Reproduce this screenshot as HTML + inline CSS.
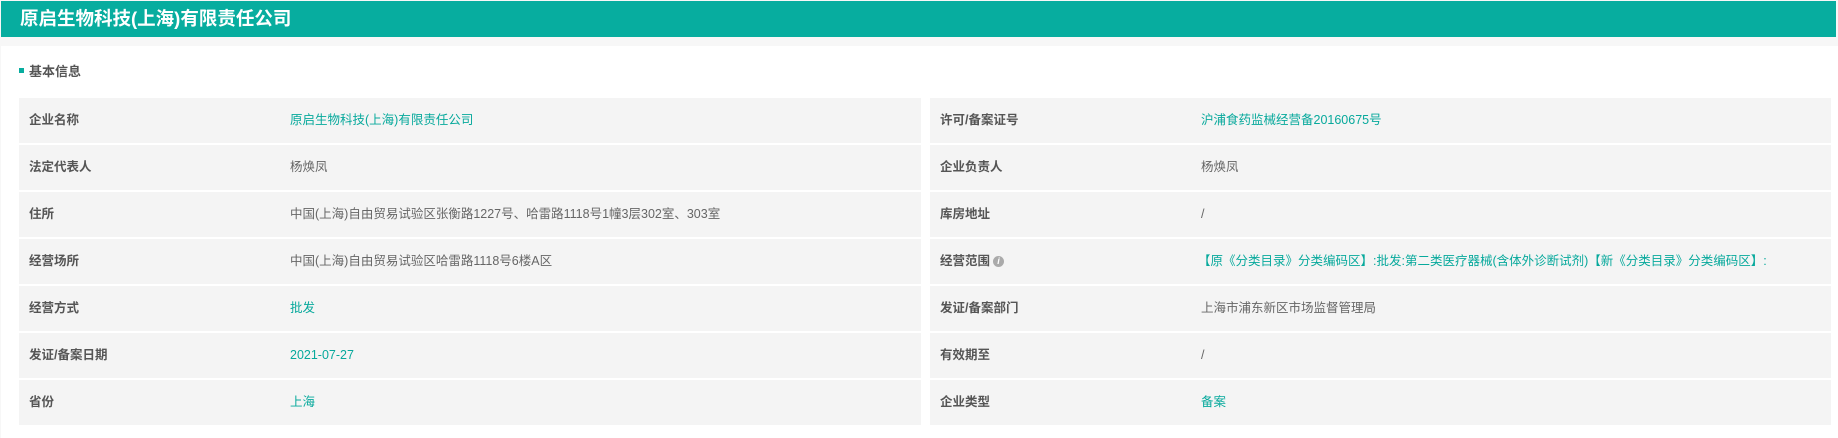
<!DOCTYPE html>
<html><head><meta charset="utf-8"><style>
*{margin:0;padding:0;box-sizing:border-box}
body{width:1838px;height:438px;background:#f7f7f7;font-family:"Liberation Sans","Noto Sans CJK SC",sans-serif;overflow:hidden;position:relative}
.hd{position:absolute;left:1px;top:1px;width:1835px;height:36px;background:#07ad9f;color:#fff;font-size:18.5px;font-weight:bold;line-height:36px;padding-left:19px}
.panel{position:absolute;left:1px;top:46px;width:1837px;height:392px;background:#fff}
.sec{position:absolute;left:19px;top:63px;font-size:13px;font-weight:bold;color:#555;line-height:18px}
.sec i{display:inline-block;width:5px;height:5px;background:#07ad9f;margin-right:5px;vertical-align:middle;position:relative;top:-2px}
.tbl{position:absolute;top:98px}
.row{height:45px;margin-bottom:2px;background:#f4f4f4;position:relative;font-size:12.5px;line-height:45px}
.l{position:absolute;left:10px;font-weight:bold;color:#555}
.v{position:absolute;color:#666}
.t{color:#07a99c}
.info{display:inline-block;width:11px;height:11px;border-radius:50%;background:#aaa;color:#fff;font-size:9px;line-height:11px;text-align:center;vertical-align:middle;margin-left:3px;font-style:italic}
</style></head><body>
<div class="hd">原启生物科技(上海)有限责任公司</div>
<div class="panel"></div>
<div class="sec"><i></i>基本信息</div>
<div class="tbl" style="left:19px;width:902px">
<div class="row"><span class="l">企业名称</span><span class="v t" style="left:271px">原启生物科技(上海)有限责任公司</span></div>
<div class="row"><span class="l">法定代表人</span><span class="v" style="left:271px">杨焕凤</span></div>
<div class="row"><span class="l">住所</span><span class="v" style="left:271px">中国(上海)自由贸易试验区张衡路1227号、哈雷路1118号1幢3层302室、303室</span></div>
<div class="row"><span class="l">经营场所</span><span class="v" style="left:271px">中国(上海)自由贸易试验区哈雷路1118号6楼A区</span></div>
<div class="row"><span class="l">经营方式</span><span class="v t" style="left:271px">批发</span></div>
<div class="row"><span class="l">发证/备案日期</span><span class="v t" style="left:271px">2021-07-27</span></div>
<div class="row"><span class="l">省份</span><span class="v t" style="left:271px">上海</span></div>
</div>
<div class="tbl" style="left:930px;width:901px">
<div class="row"><span class="l">许可/备案证号</span><span class="v t" style="left:271px">沪浦食药监械经营备20160675号</span></div>
<div class="row"><span class="l">企业负责人</span><span class="v" style="left:271px">杨焕凤</span></div>
<div class="row"><span class="l">库房地址</span><span class="v" style="left:271px">/</span></div>
<div class="row"><span class="l">经营范围<span class="info">i</span></span><span class="v t" style="left:268px">【原《分类目录》分类编码区】:批发:第二类医疗器械(含体外诊断试剂)【新《分类目录》分类编码区】:</span></div>
<div class="row"><span class="l">发证/备案部门</span><span class="v" style="left:271px">上海市浦东新区市场监督管理局</span></div>
<div class="row"><span class="l">有效期至</span><span class="v" style="left:271px">/</span></div>
<div class="row"><span class="l">企业类型</span><span class="v t" style="left:271px">备案</span></div>
</div>
</body></html>
